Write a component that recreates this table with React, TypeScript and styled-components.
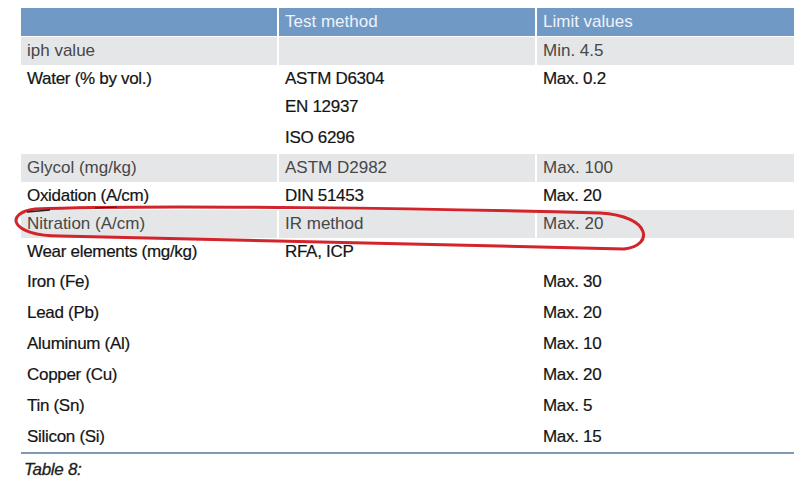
import React from "react";
import styled, { createGlobalStyle } from "styled-components";

const Global = createGlobalStyle`
  html, body { margin: 0; padding: 0; background: #ffffff; }
  body { font-family: "Liberation Sans", Arial, sans-serif; }
`;

const Page = styled.div`
  position: relative;
  width: 800px;
  height: 490px;
  padding: 8px 0 0 21px;
  box-sizing: border-box;
`;

const Table = styled.div`
  width: 773px;
  display: flex;
  flex-direction: column;
`;

const Row = styled.div<{ $h: number; $head?: boolean }>`
  display: grid;
  grid-template-columns: 256px 256px 257px;
  column-gap: 2px;
  height: ${(p) => p.$h}px;
  margin-bottom: ${(p) => (p.$head ? 1 : 0)}px;
`;

const Cell = styled.div<{ $shaded?: boolean; $head?: boolean }>`
  display: flex;
  align-items: center;
  padding-left: ${(p) => (p.$head ? 6 : 6)}px;
  font-size: 17px;
  white-space: nowrap;
  background: ${(p) => (p.$head ? "#7099c6" : p.$shaded ? "#e5e6e8" : "transparent")};
  color: ${(p) => (p.$head ? "#eef3f9" : p.$shaded ? "#474747" : "#141414")};
  -webkit-text-stroke: ${(p) => (p.$head || p.$shaded ? "0" : "0.2px #141414")};
  letter-spacing: ${(p) => (p.$head || p.$shaded ? "0" : "-0.3px")};
`;

const Rule = styled.div`
  height: 2px;
  background: #8199b7;
`;

const Caption = styled.div`
  margin: 6px 0 0 3px;
  font-size: 17px;
  font-style: italic;
  color: #1e1e1e;
  -webkit-text-stroke: 0.3px #1e1e1e;
  letter-spacing: -0.3px;
`;

const Annotation = styled.svg`
  position: absolute;
  left: 0;
  top: 0;
  pointer-events: none;
`;

type R = { a: string; b: string; c: string; h: number; shaded?: boolean };

const rows: R[] = [
  { a: "iph value", b: "", c: "Min. 4.5", h: 28, shaded: true },
  { a: "Water (% by vol.)", b: "ASTM D6304", c: "Max. 0.2", h: 28 },
  { a: "", b: "EN 12937", c: "", h: 28 },
  { a: "", b: "ISO 6296", c: "", h: 33 },
  { a: "Glycol (mg/kg)", b: "ASTM D2982", c: "Max. 100", h: 28, shaded: true },
  { a: "Oxidation (A/cm)", b: "DIN 51453", c: "Max. 20", h: 28 },
  { a: "Nitration (A/cm)", b: "IR method", c: "Max. 20", h: 28, shaded: true },
  { a: "Wear elements (mg/kg)", b: "RFA, ICP", c: "", h: 28 },
  { a: "Iron (Fe)", b: "", c: "Max. 30", h: 31 },
  { a: "Lead (Pb)", b: "", c: "Max. 20", h: 31 },
  { a: "Aluminum (Al)", b: "", c: "Max. 10", h: 31 },
  { a: "Copper (Cu)", b: "", c: "Max. 20", h: 31 },
  { a: "Tin (Sn)", b: "", c: "Max. 5", h: 31 },
  { a: "Silicon (Si)", b: "", c: "Max. 15", h: 31 },
];

export default function App() {
  return (
    <>
      <Global />
      <Page>
        <Table>
          <Row $h={28} $head>
            <Cell $head></Cell>
            <Cell $head>Test method</Cell>
            <Cell $head>Limit values</Cell>
          </Row>
          {rows.map((r, i) => (
            <Row key={i} $h={r.h}>
              <Cell $shaded={r.shaded}>{r.a}</Cell>
              <Cell $shaded={r.shaded}>{r.b}</Cell>
              <Cell $shaded={r.shaded}>{r.c}</Cell>
            </Row>
          ))}
          <Rule />
        </Table>
        <Caption>Table 8:</Caption>
        <Annotation width="800" height="490" viewBox="0 0 800 490">
          <path
            d="M35 209 C 150 204, 450 209, 600 213 C 652 216, 654 246, 624 249 C 520 247, 300 240, 60 236 C 10 236, 4 213, 35 209 Z"
            fill="none"
            stroke="#d3232b"
            strokeWidth="3"
            strokeLinejoin="round"
          />
          <path d="M27 212 L50 210" stroke="#222" strokeWidth="1.5" />
          <path d="M95 208 L117 207" stroke="#222" strokeWidth="1.2" />
        </Annotation>
      </Page>
    </>
  );
}
